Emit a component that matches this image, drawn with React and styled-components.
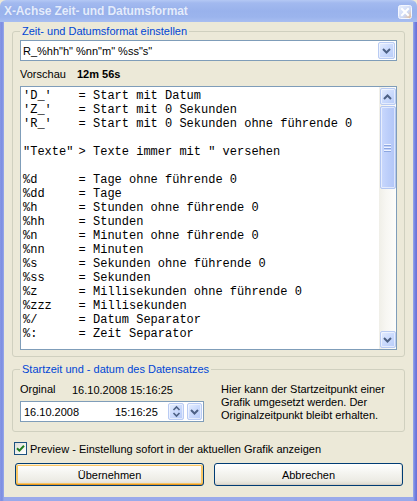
import React from 'react'
import styled, { createGlobalStyle } from 'styled-components'

const GlobalStyle = createGlobalStyle`
  html, body {
    margin: 0;
    padding: 0;
    background: #ece9d8;
  }
  body {
    font-family: "Liberation Sans", Arial, sans-serif;
    font-size: 11px;
    color: #000;
  }
`;

const Window = styled.div`
  width: 417px;
  height: 501px;
  display: flex;
  flex-direction: column;
  overflow: hidden;
`;

const TitleBar = styled.div`
  height: 22px;
  flex: none;
  display: flex;
  align-items: center;
  justify-content: space-between;
  padding: 0 5px 0 4px;
  background: linear-gradient(to bottom, #b4c8f4 0px, #a2b9ef 3px, #99b2ec 11px, #9bb4ed 17px, #a8bef1 22px);
  border-radius: 6px 6px 0 0;
`;

const Caption = styled.span`
  font-weight: bold;
  font-size: 12px;
  color: #e4ecfc;
  letter-spacing: -0.1px;
  text-shadow: 0 0 1px rgba(120, 140, 210, 0.4);
`;

const CloseBox = styled.div`
  width: 14px;
  height: 14px;
  margin-top: 2px;
  display: flex;
`;

const Frame = styled.div`
  flex: 1;
  display: flex;
  padding: 0 4px 4px;
  background: linear-gradient(to right, #8897e4 0, #7b8de2 2px, #9aaaea 4px, #9aaaea calc(100% - 4px), #7381df calc(100% - 2px), #6a70d8 100%);
`;

const Client = styled.div`
  flex: 1;
  display: flex;
  flex-direction: column;
  background: #ece9d8;
  padding: 3px 8px 0 8px;
`;

const GroupBox = styled.fieldset`
  margin: ${p => p.$top || 0}px 0 0 0;
  padding: 0;
  border: 1px solid #d0d0bf;
  border-radius: 3px;
  min-width: 0;
`;

const Legend = styled.legend`
  margin-left: 7px;
  padding: 0 2px;
  color: #0046d5;
  font-size: 11px;
  line-height: 13px;
`;

const GroupBody = styled.div`
  display: flex;
  flex-direction: column;
  padding: ${p => p.$pad};
`;

const Combo = styled.div`
  height: 21px;
  box-sizing: border-box;
  border: 1px solid #7f9db9;
  background: #fff;
  display: flex;
  align-items: center;
  padding-left: 2px;
`;

const ComboText = styled.span`
  flex: 1;
  white-space: pre;
`;

const XpButton = styled.div`
  width: ${p => p.$w || 17}px;
  height: ${p => p.$h || 17}px;
  box-sizing: border-box;
  margin: ${p => p.$m || '0'};
  flex: none;
  border: 1px solid #b9cbf3;
  border-radius: 2px;
  background: linear-gradient(135deg, #e6eefe 0%, #cddcfd 45%, #b7cbf8 100%);
  box-shadow: inset 0 0 0 1px rgba(255, 255, 255, 0.55);
  display: flex;
  align-items: center;
  justify-content: center;
`;

const PreviewRow = styled.div`
  height: 25px;
  display: flex;
  align-items: center;
`;

const PreviewLabel = styled.span`
  width: 57px;
`;

const PreviewValue = styled.span`
  font-weight: bold;
`;

const Memo = styled.div`
  height: 264px;
  box-sizing: border-box;
  border: 1px solid #7f9db9;
  background: #fff;
  display: flex;
`;

const MemoText = styled.div`
  flex: 1;
  padding: 2px 0 0 2px;
  font-family: "Liberation Mono", "Courier New", monospace;
  font-size: 12px;
  line-height: 14px;
  overflow: hidden;
`;

const MemoLine = styled.div`
  height: 14px;
  display: flex;
  white-space: pre;
`;

const MemoKey = styled.span`
  width: 55.6px;
  flex: none;
`;

const ScrollBar = styled.div`
  width: 17px;
  flex: none;
  display: flex;
  flex-direction: column;
  align-items: center;
  padding: 1px 0;
  background: linear-gradient(to right, #f0efe8 0%, #f7f6f2 40%, #fdfdfb 100%);
`;

const ScrollTrack = styled.div`
  flex: 1;
  display: flex;
  flex-direction: column;
  padding-top: 1px;
`;

const Thumb = styled(XpButton)`
  height: 83px;
  width: 16px;
  flex-direction: column;
  gap: 1px;
  border-color: #b2c6f2;
  background: linear-gradient(to right, #c9d8fc 0%, #bccefa 50%, #b2c6f7 100%);
`;

const Grip = styled.span`
  width: 7px;
  height: 1px;
  background: #eef3fe;
  border-bottom: 1px solid #8ca6e0;
`;

const Row = styled.div`
  display: flex;
  align-items: ${p => p.$align || 'center'};
`;

const OrigLabel = styled.span`
  width: 52px;
  line-height: 13px;
`;

const Columns = styled.div`
  display: flex;
  gap: 17px;
`;

const LeftCol = styled.div`
  width: 184px;
  display: flex;
  flex-direction: column;
  gap: 5px;
`;

const Hint = styled.p`
  margin: 0;
  line-height: 13px;
`;

const DateEdit = styled.div`
  height: 21px;
  box-sizing: border-box;
  border: 1px solid #7f9db9;
  background: #fff;
  display: flex;
  align-items: center;
  padding-left: 3px;
  gap: 0;
`;

const DatePart = styled.span`
  width: 91px;
`;

const TimePart = styled.span`
  flex: 1;
`;

const CheckRow = styled.label`
  display: flex;
  align-items: center;
  gap: 3px;
  margin: 10px 0 0 2px;
`;

const CheckBox = styled.span`
  width: 13px;
  height: 13px;
  box-sizing: border-box;
  border: 1px solid #1c5180;
  background: linear-gradient(135deg, #dcdcd7 0%, #f4f4f0 60%, #fff 100%);
  display: flex;
  align-items: center;
  justify-content: center;
`;

const ButtonRow = styled.div`
  display: flex;
  gap: 10px;
  margin: 8px 2px 0 3px;
`;

const PushButton = styled.button`
  flex: 1;
  height: 23px;
  padding: 0;
  font: inherit;
  color: #000;
  border: 1px solid #003c74;
  border-radius: 3px;
  background: linear-gradient(to bottom, #ffffff 0%, #f5f5f1 40%, #ecebe4 80%, #dcd8cd 100%);
  box-shadow: ${p => p.$default
    ? 'inset 0 1px 0 #fff0cf, inset 0 -1px 0 #e5971f, inset 1px 0 0 #f9c964, inset -1px 0 0 #f9c964, inset 0 0 0 2px #f8c566'
    : 'inset 0 -1px 0 #d6d0c5, inset -1px 0 0 #e3e0d5'};
`;

const Chevron = ({ up }) => (
  <svg width="9" height="6" viewBox="0 0 9 6">
    <path
      d={up ? 'M1 5 L4.5 1.5 L8 5' : 'M1 1 L4.5 4.5 L8 1'}
      fill="none"
      stroke="#4d6185"
      strokeWidth="2"
    />
  </svg>
);

const SpinArrows = () => (
  <svg width="9" height="13" viewBox="0 0 9 13">
    <path d="M1.5 5 L4.5 2 L7.5 5" fill="none" stroke="#4d6185" strokeWidth="1.6" />
    <path d="M1.5 8 L4.5 11 L7.5 8" fill="none" stroke="#4d6185" strokeWidth="1.6" />
  </svg>
);

const memoLines = [
  ["'D_'", '= Start mit Datum'],
  ["'Z_'", '= Start mit 0 Sekunden'],
  ["'R_'", '= Start mit 0 Sekunden ohne führende 0'],
  ['', ''],
  ['"Texte"', '> Texte immer mit " versehen'],
  ['', ''],
  ['%d', '= Tage ohne führende 0'],
  ['%dd', '= Tage'],
  ['%h', '= Stunden ohne führende 0'],
  ['%hh', '= Stunden'],
  ['%n', '= Minuten ohne führende 0'],
  ['%nn', '= Minuten'],
  ['%s', '= Sekunden ohne führende 0'],
  ['%ss', '= Sekunden'],
  ['%z', '= Millisekunden ohne führende 0'],
  ['%zzz', '= Millisekunden'],
  ['%/', '= Datum Separator'],
  ['%:', '= Zeit Separator'],
];

export default function App() {
  return (
    <>
      <GlobalStyle />
      <Window>
        <TitleBar>
          <Caption>X-Achse Zeit- und Datumsformat</Caption>
          <CloseBox>
            <svg width="14" height="14" viewBox="0 0 14 14">
              <defs>
                <linearGradient id="cb" x1="0" y1="0" x2="1" y2="1">
                  <stop offset="0" stopColor="#e9effd" />
                  <stop offset="0.6" stopColor="#cdd9f6" />
                  <stop offset="1" stopColor="#e8b98a" />
                </linearGradient>
              </defs>
              <rect x="0.5" y="0.5" width="13" height="13" rx="2" fill="url(#cb)" stroke="#f4f7ff" />
              <path d="M4 4 L10 10 M10 4 L4 10" stroke="#fff" strokeWidth="2" strokeLinecap="square" />
            </svg>
          </CloseBox>
        </TitleBar>
        <Frame>
          <Client>
            <GroupBox>
              <Legend>Zeit- und Datumsformat einstellen</Legend>
              <GroupBody $pad="2px 7px 6px 7px">
                <Combo>
                  <ComboText>R_%hh"h" %nn"m" %ss"s"</ComboText>
                  <XpButton $m="1px">
                    <Chevron />
                  </XpButton>
                </Combo>
                <PreviewRow>
                  <PreviewLabel>Vorschau</PreviewLabel>
                  <PreviewValue>12m 56s</PreviewValue>
                </PreviewRow>
                <Memo>
                  <MemoText>
                    {memoLines.map(([key, text], i) => (
                      <MemoLine key={i}>
                        <MemoKey>{key}</MemoKey>
                        <span>{text}</span>
                      </MemoLine>
                    ))}
                  </MemoText>
                  <ScrollBar>
                    <XpButton $w={16} $h={17}>
                      <Chevron up />
                    </XpButton>
                    <ScrollTrack>
                      <Thumb>
                        <Grip />
                        <Grip />
                        <Grip />
                      </Thumb>
                    </ScrollTrack>
                    <XpButton $w={16} $h={17}>
                      <Chevron />
                    </XpButton>
                  </ScrollBar>
                </Memo>
              </GroupBody>
            </GroupBox>

            <GroupBox $top={6}>
              <Legend>Startzeit und - datum des Datensatzes</Legend>
              <GroupBody $pad="7px 7px 9px 7px">
                <Columns>
                  <LeftCol>
                    <Row>
                      <OrigLabel>Orginal</OrigLabel>
                      <span>16.10.2008 15:16:25</span>
                    </Row>
                    <DateEdit>
                      <DatePart>16.10.2008</DatePart>
                      <TimePart>15:16:25</TimePart>
                      <XpButton $w={16} $h={17} $m="0 3px 0 0">
                        <SpinArrows />
                      </XpButton>
                      <XpButton $w={15} $h={17} $m="0 1px 0 0">
                        <Chevron />
                      </XpButton>
                    </DateEdit>
                  </LeftCol>
                  <Hint>
                    Hier kann der Startzeitpunkt einer<br />
                    Grafik umgesetzt werden. Der<br />
                    Originalzeitpunkt bleibt erhalten.
                  </Hint>
                </Columns>
              </GroupBody>
            </GroupBox>

            <CheckRow>
              <CheckBox>
                <svg width="9" height="9" viewBox="0 0 9 9">
                  <path d="M1 4.2 L3.4 6.6 L8 1.8" fill="none" stroke="#1f7d1f" strokeWidth="2" />
                </svg>
              </CheckBox>
              <span>Preview - Einstellung sofort in der aktuellen Grafik anzeigen</span>
            </CheckRow>

            <ButtonRow>
              <PushButton $default>Übernehmen</PushButton>
              <PushButton>Abbrechen</PushButton>
            </ButtonRow>
          </Client>
        </Frame>
      </Window>
    </>
  )
}
